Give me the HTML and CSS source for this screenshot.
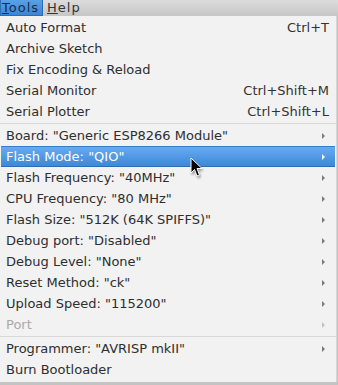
FILE: index.html
```html
<!DOCTYPE html>
<html>
<head>
  <meta charset="utf-8" />
  <title>Tools menu</title>
  <link rel="stylesheet" href="styles.css">
</head>
<body>
  <div class="menubar">
    <span class="menu open"><u>T</u>ools</span>
    <span class="menu"><u>H</u>elp</span>
  </div>
  <ul class="dropdown">
    <li class="item"><span class="label">Auto Format</span><span class="accel">Ctrl+T</span></li>
    <li class="item"><span class="label">Archive Sketch</span></li>
    <li class="item"><span class="label">Fix Encoding &amp; Reload</span></li>
    <li class="item"><span class="label">Serial Monitor</span><span class="accel">Ctrl+Shift+M</span></li>
    <li class="item"><span class="label">Serial Plotter</span><span class="accel">Ctrl+Shift+L</span></li>
    <li class="sep"></li>
    <li class="item sub"><span class="label">Board: "Generic ESP8266 Module"</span><span class="arrow"></span></li>
    <li class="item sub selected"><span class="label">Flash Mode: "QIO"</span><span class="arrow"></span></li>
    <li class="item sub"><span class="label">Flash Frequency: "40MHz"</span><span class="arrow"></span></li>
    <li class="item sub"><span class="label">CPU Frequency: "80 MHz"</span><span class="arrow"></span></li>
    <li class="item sub"><span class="label">Flash Size: "512K (64K SPIFFS)"</span><span class="arrow"></span></li>
    <li class="item sub"><span class="label">Debug port: "Disabled"</span><span class="arrow"></span></li>
    <li class="item sub"><span class="label">Debug Level: "None"</span><span class="arrow"></span></li>
    <li class="item sub"><span class="label">Reset Method: "ck"</span><span class="arrow"></span></li>
    <li class="item sub"><span class="label">Upload Speed: "115200"</span><span class="arrow"></span></li>
    <li class="item sub disabled"><span class="label">Port</span><span class="arrow"></span></li>
    <li class="sep"></li>
    <li class="item sub"><span class="label">Programmer: "AVRISP mkII"</span><span class="arrow"></span></li>
    <li class="item"><span class="label">Burn Bootloader</span></li>
  </ul>
  <svg class="cursor" width="14" height="22" viewBox="0 0 14 22">
    <path d="M1 1 L1 16 L4.5 12.5 L7 19 L9.5 18 L7 11.5 L12 11.5 Z" fill="#000" stroke="#fff" stroke-width="1" stroke-linejoin="round"/>
  </svg>
</body>
</html>
```

FILE: styles.css
```css
html, body {
  margin: 0;
  padding: 0;
}

body {
  background: #c3c3c3;
  font-family: "DejaVu Sans", sans-serif;
  color: #2e2e2e;
  width: 338px;
  height: 385px;
  overflow: hidden;
  position: relative;
}

.menubar {
  height: 16px;
  display: flex;
  align-items: stretch;
  background: linear-gradient(to bottom, #dcdcdc 0%, #c6c6c6 100%);
  font-size: 13px;
  line-height: 16px;
  letter-spacing: 1px;
}

.menu {
  padding: 0 3px 0 3px;
  margin-right: 1px;
  color: #333;
}

.menu.open {
  background: linear-gradient(to bottom, #5aa0e6 0%, #3a86d6 100%);
  border: 1px solid #2f6db3;
  border-top: 0;
  line-height: 15px;
  padding: 0 3px 0 1px;
  color: #1b2b48;
}

.dropdown {
  list-style: none;
  margin: 0;
  padding: 1px 0 2px 0;
  width: 336px;
  background: #f2f2f2;
  border-right: 1px solid #d6d6d6;
  font-size: 13px;
}

.item {
  height: 21px;
  display: flex;
  align-items: center;
  padding: 0 6px 0 5px;
  margin: 0 1px;
}

.label {
  flex: 1;
  white-space: nowrap;
}

.accel {
  color: #333;
}

.arrow {
  width: 0;
  height: 0;
  border-top: 3px solid transparent;
  border-bottom: 3px solid transparent;
  border-left: 3px solid #7a7a7a;
  margin-right: 4px;
}

.selected {
  background: linear-gradient(to bottom, #68aaee 0%, #3d88da 100%);
  border-top: 1px solid #3a7cc8;
  border-bottom: 1px solid #2f6db3;
  height: 19px;
  color: #fff;
}

.selected .arrow {
  border-left-color: #fff;
}

.disabled {
  color: #a9a9a9;
}

.disabled .arrow {
  border-left-color: #c2c2c2;
}

.sep {
  height: 1px;
  margin: 1px 0 1px 0;
  background: #d8d8d8;
}

.cursor {
  position: absolute;
  left: 190px;
  top: 157px;
  filter: drop-shadow(1px 2px 1px rgba(0, 0, 0, 0.35));
}
```
